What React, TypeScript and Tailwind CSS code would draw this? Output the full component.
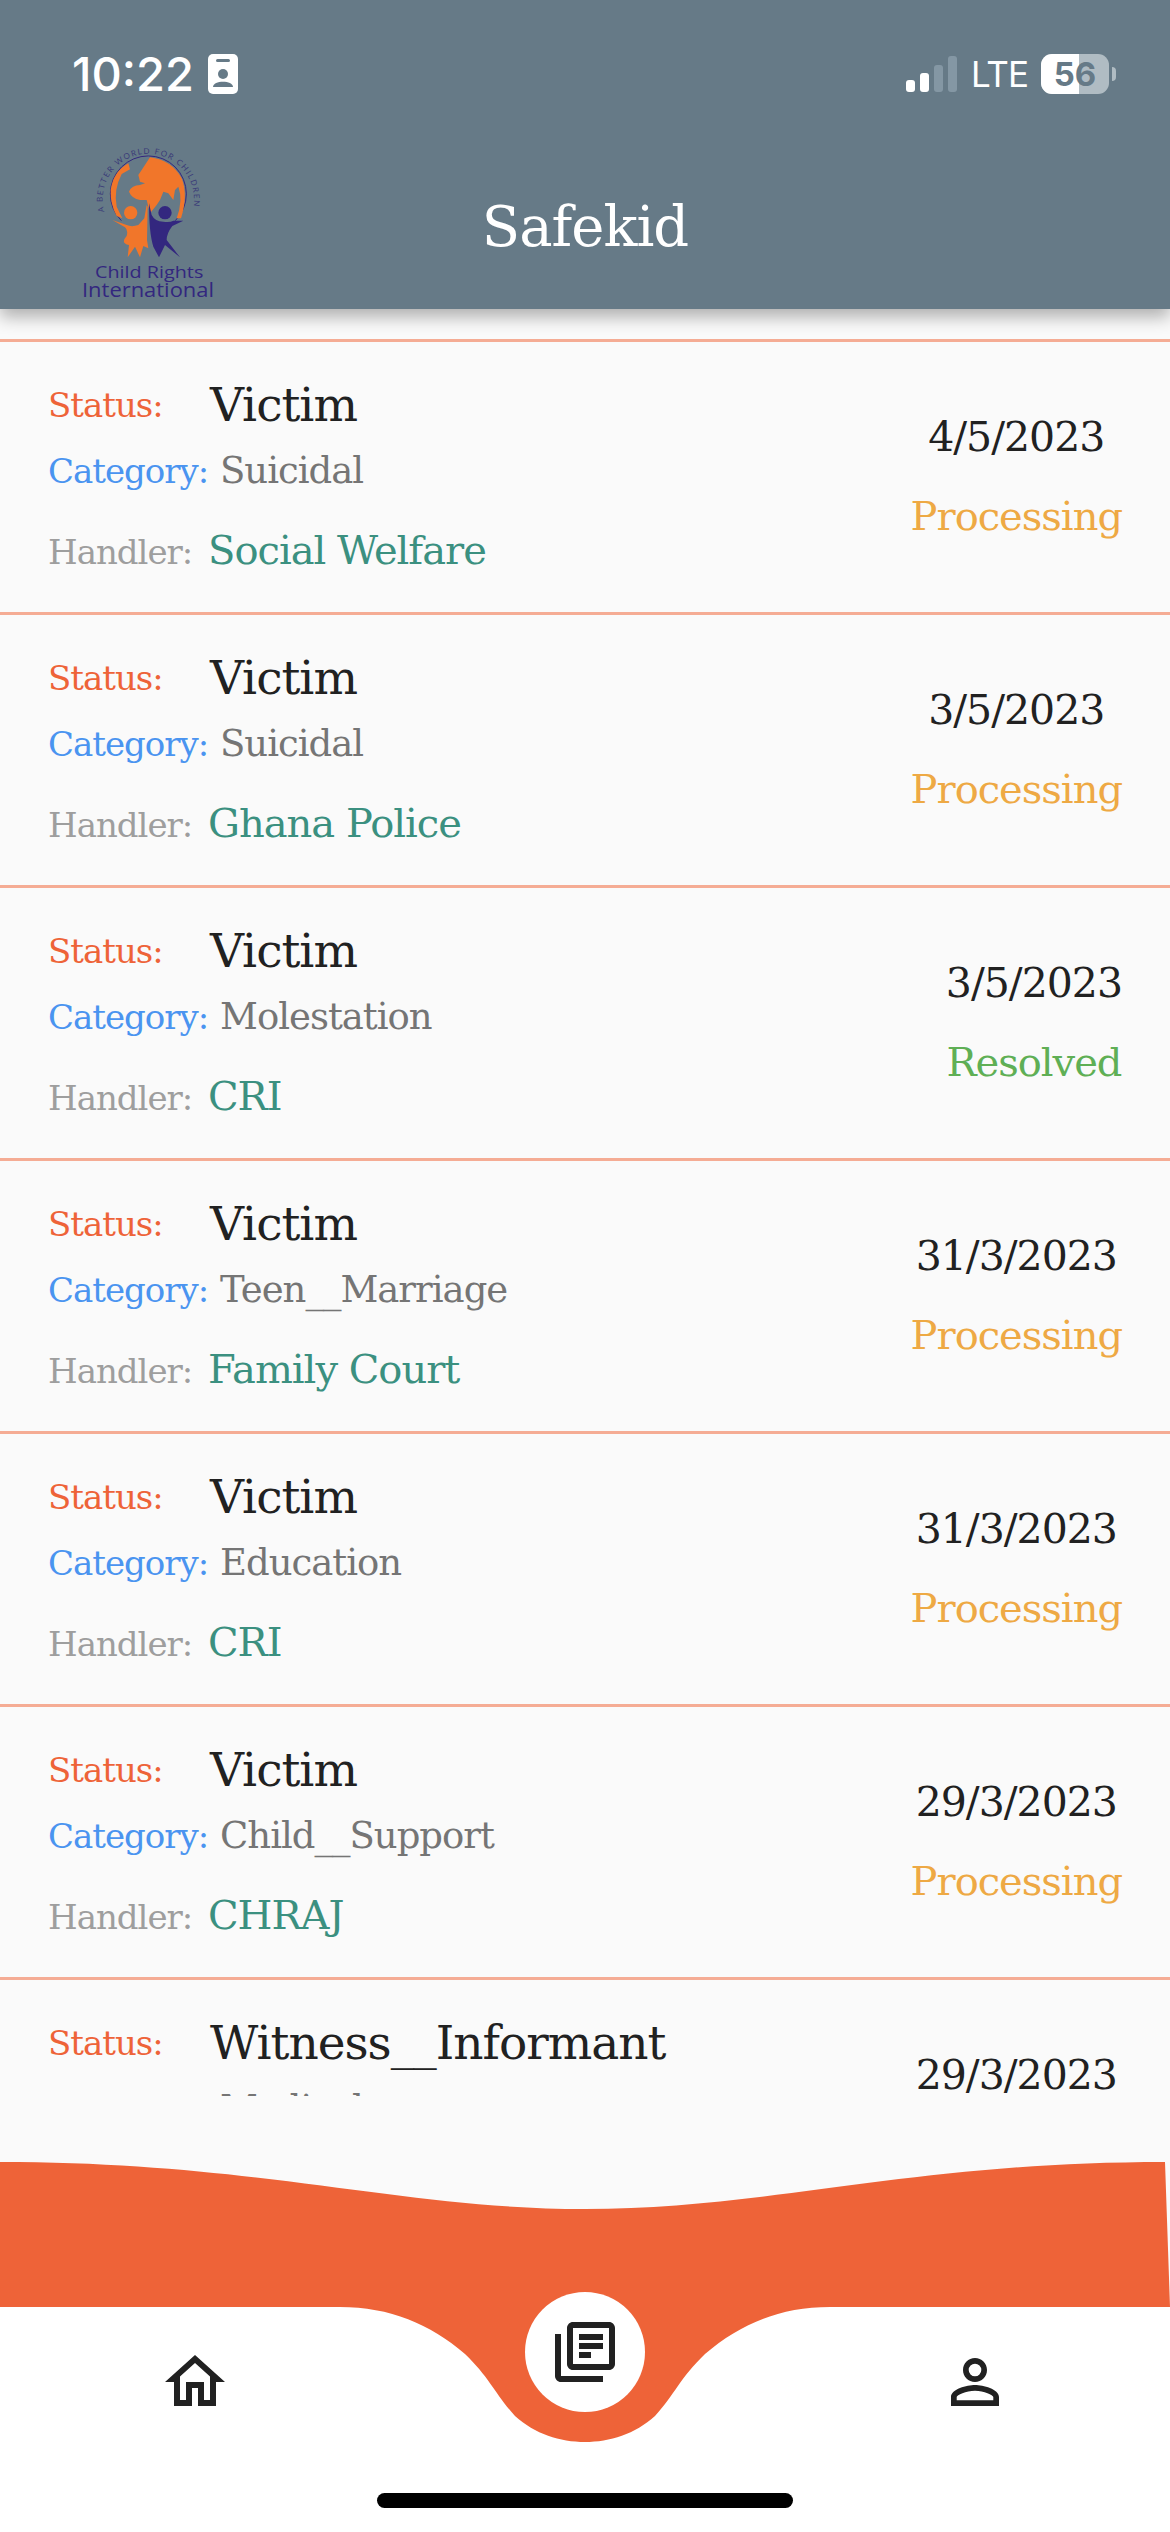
import { MdOutlineHome, MdOutlineLibraryBooks, MdPersonOutline } from 'react-icons/md';

interface Report {
  id: number;
  status: string;
  category: string;
  handler: string;
  date: string;
  state: 'Processing' | 'Resolved';
}

const reports: Report[] = [
  { id: 1, status: 'Victim', category: 'Suicidal', handler: 'Social Welfare', date: '4/5/2023', state: 'Processing' },
  { id: 2, status: 'Victim', category: 'Suicidal', handler: 'Ghana Police', date: '3/5/2023', state: 'Processing' },
  { id: 3, status: 'Victim', category: 'Molestation', handler: 'CRI', date: '3/5/2023', state: 'Resolved' },
  { id: 4, status: 'Victim', category: 'Teen__Marriage', handler: 'Family Court', date: '31/3/2023', state: 'Processing' },
  { id: 5, status: 'Victim', category: 'Education', handler: 'CRI', date: '31/3/2023', state: 'Processing' },
  { id: 6, status: 'Victim', category: 'Child__Support', handler: 'CHRAJ', date: '29/3/2023', state: 'Processing' },
  { id: 7, status: 'Witness__Informant', category: 'Medical', handler: 'CRI', date: '29/3/2023', state: 'Processing' },
];

function Logo() {
  return (
    <svg width="180" height="170" viewBox="0 0 540 510" className="block">
      <g transform="translate(75 30)">
        <path d="M109 212 A114 114 0 1 1 271 212" fill="none" stroke="#33277f" strokeWidth="3" />
        {/* left rim */}
        <path d="M130 40 L135 58 L110 72 Q85 120 95 170 L112 205 L95 198 Q75 160 77 120 Q85 65 130 40 Z" fill="#f1762a" />
        {/* africa, europe and asia */}
        <path
          d="M170 60 L195 22 Q260 30 290 85 Q310 135 288 205 L275 205 Q295 150 280 110 L270 120 L265 150 L250 130 L235 125 L225 150 L215 165 L195 190 L185 150 L165 150 Q140 145 132 125 Q140 105 165 105 L180 100 L165 95 L160 75 Z"
          fill="#f1762a"
        />
        <path id="logo-arc" d="M58 185 A137 137 0 1 1 322 185" fill="none" />
        <text fontFamily="Lato, sans-serif" fontSize="24" letterSpacing="4" fill="#3a3a78">
          <textPath href="#logo-arc">A BETTER WORLD FOR CHILDREN</textPath>
        </text>
        <circle cx="137" cy="188" r="20" fill="#f1762a" />
        <circle cx="240" cy="188" r="20" fill="#33277f" />
        <path
          d="M82 210 L125 225 Q140 232 160 225 L178 205 L185 165 L188 170 L186 270 L190 295 L175 288 L165 322 L150 290 L128 322 L132 285 Q105 280 125 258 Q130 240 120 232 Z"
          fill="#f1762a"
        />
        <path
          d="M192 160 L200 195 Q210 215 235 215 Q255 218 265 212 L295 212 L262 228 Q245 250 245 270 L285 322 L240 285 L222 322 L205 290 Q192 250 192 160 Z"
          fill="#33277f"
        />
      </g>
      <text x="105" y="415" textLength="325" lengthAdjust="spacingAndGlyphs" fontFamily="'Open Sans', sans-serif" fontSize="50" fontWeight="500" fill="#33277f">
        Child Rights
      </text>
      <text x="66" y="470" textLength="396" lengthAdjust="spacingAndGlyphs" fontFamily="'Open Sans', sans-serif" fontSize="58" fontWeight="500" fill="#33277f">
        International
      </text>
    </svg>
  );
}

function StatusBar() {
  return (
    <div className="flex h-[148px] items-start justify-between pl-[72px] pr-[54px] pt-[46px] font-['Inter',sans-serif] text-white">
      <div className="flex items-center gap-[14px]">
        <span className="text-[47px] font-medium leading-[56px]">10:22</span>
        <svg width="30" height="40" viewBox="0 0 30 40">
          <rect width="30" height="40" rx="5" fill="#fff" />
          <rect x="8" y="5" width="14" height="3" rx="1.5" fill="#667a87" />
          <circle cx="15" cy="20" r="5" fill="#667a87" />
          <path d="M5 33 C5 26 25 26 25 33 Z" fill="#667a87" />
        </svg>
      </div>
      <div className="flex items-center pt-[8px]">
        <svg width="52" height="36" viewBox="0 0 52 36">
          <rect x="0" y="24" width="9" height="12" rx="3" fill="#fff" />
          <rect x="14" y="17" width="9" height="19" rx="3" fill="#fff" />
          <rect x="28" y="9" width="9" height="27" rx="3" fill="#8497a4" />
          <rect x="42" y="0" width="9" height="36" rx="3" fill="#8497a4" />
        </svg>
        <span className="ml-[13px] text-[35px] leading-[40px] tracking-[-1px]">LTE</span>
        <div className="relative ml-[13px] flex h-[40px] w-[68px] items-center justify-center overflow-hidden rounded-[11px] bg-[#b0bcc3]">
          <div className="absolute inset-y-0 left-0 w-[38px] bg-white" />
          <span className="relative text-[33px] font-bold leading-none text-[#667a87]">56</span>
        </div>
        <div className="ml-[3px] h-[14px] w-[4px] rounded-r-full bg-[#b0bcc3]" />
      </div>
    </div>
  );
}

function ReportRow({ report }: { report: Report }) {
  return (
    <div className="flex h-[273px] shrink-0 items-start justify-between border-t-[3px] border-[#f5ac94] pl-[48px] pr-[48px] font-['DejaVu_Serif',serif]">
      <div className="flex flex-col pt-[36px]">
        <div className="flex h-[54px] items-center">
          <span className="w-[162px] text-[34px] leading-[54px] tracking-[-1px] text-[#ee6338]">Status:</span>
          <span className="text-[47px] leading-[54px] tracking-[-1px] text-[#212121]">{report.status}</span>
        </div>
        <div className="mt-[12px] flex h-[54px] items-center">
          <span className="w-[172px] text-[34px] leading-[54px] tracking-[-1px] text-[#4a94f0]">Category:</span>
          <span className="text-[37px] leading-[54px] tracking-[-1px] text-[#757575]">{report.category}</span>
        </div>
        <div className="mt-[25px] flex h-[54px] items-baseline">
          <span className="w-[160px] text-[34px] leading-[54px] tracking-[-1px] text-[#9e9e9e]">Handler:</span>
          <span className="text-[40px] leading-[54px] tracking-[-1px] text-[#3b9080]">{report.handler}</span>
        </div>
      </div>
      <div className="flex flex-col items-center pt-[70px]">
        <span className="text-[41px] leading-[50px] tracking-[-1px] text-[#212121]">{report.date}</span>
        <span
          className={
            report.state === 'Resolved'
              ? 'mt-[29px] text-[40px] leading-[50px] tracking-[-1px] text-[#5faf55]'
              : 'mt-[29px] text-[40px] leading-[50px] tracking-[-1px] text-[#eea944]'
          }
        >
          {report.state}
        </span>
      </div>
    </div>
  );
}

function BottomNav() {
  return (
    <div className="relative flex h-[436px] shrink-0 flex-col">
      <svg viewBox="0 0 1170 436" className="absolute inset-0 h-full w-full">
        <rect width="1170" height="436" fill="#fff" />
        <rect width="1170" height="211" fill="#fafafa" />
        <path
          d="M0 66 C260 66 400 113 585 113 C770 113 910 66 1165 66 L1170 211 H830 C780 211 740 228 705 258 C680 282 675 298 655 320 C635 338 610 346 585 346 C560 346 535 338 515 320 C495 298 490 282 465 258 C430 228 390 211 340 211 H0 Z"
          fill="#ee6338"
        />
      </svg>
      <div className="relative grid grid-cols-3 justify-items-center pt-[250px] text-[#212121]">
        <MdOutlineHome size={72} />
        <div className="-mt-[54px] flex h-[120px] w-[120px] items-center justify-center rounded-full bg-white">
          <MdOutlineLibraryBooks size={72} />
        </div>
        <MdPersonOutline size={72} />
      </div>
      <div className="relative mx-auto mt-[75px] h-[15px] w-[416px] rounded-full bg-black" />
    </div>
  );
}

export default function App() {
  return (
    <div className="flex h-[2532px] w-[1170px] flex-col overflow-hidden bg-[#fafafa]">
      <header className="relative z-10 h-[309px] shrink-0 bg-[#667a87] shadow-[0_8px_16px_rgba(0,0,0,0.3)]">
        <StatusBar />
        <div className="grid grid-cols-[296px_1fr_296px]">
          <div className="-mt-[8px] pl-[60px]">
            <Logo />
          </div>
          <h1 className="pt-[47px] text-center font-['DejaVu_Serif',serif] text-[56px] font-normal leading-[64px] tracking-[-1px] text-white">
            Safekid
          </h1>
        </div>
      </header>
      <div className="flex h-[1787px] shrink-0 flex-col overflow-hidden pt-[30px]">
        {reports.map((report) => (
          <ReportRow key={report.id} report={report} />
        ))}
      </div>
      <BottomNav />
    </div>
  );
}
